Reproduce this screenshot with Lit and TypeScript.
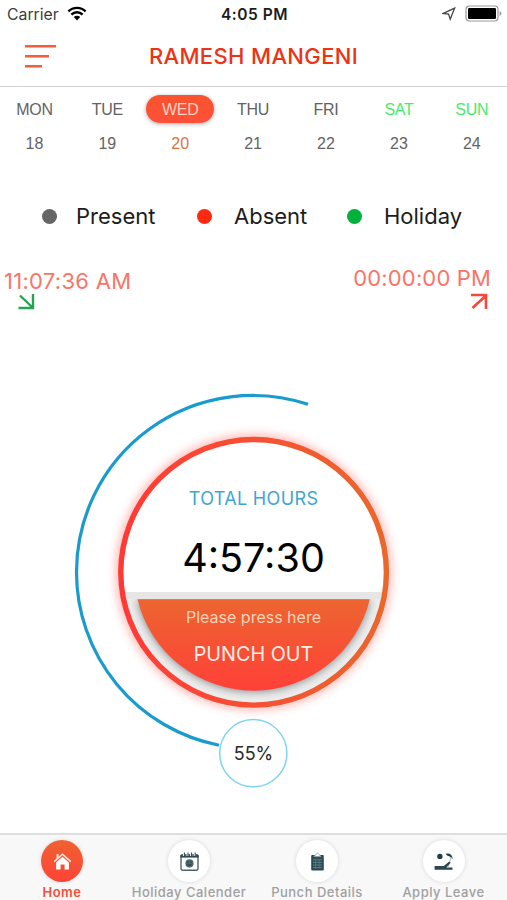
import { LitElement, html, svg, css } from "lit";
import { customElement } from "lit/decorators.js";
import { classMap } from "lit/directives/class-map.js";

const DAYS = [
  { name: "MON", date: 18 },
  { name: "TUE", date: 19 },
  { name: "WED", date: 20, active: true },
  { name: "THU", date: 21 },
  { name: "FRI", date: 22 },
  { name: "SAT", date: 23, weekend: true },
  { name: "SUN", date: 24, weekend: true },
];

const homeIcon = svg`
  <path d="M1.2 9.6 L9.5 2.2 L17.8 9.6" fill="none" stroke="#ffe9e2" stroke-width="1.5"/>
  <path d="M3.6 2h2v3.4l-2 1.8z" fill="#ffe9e2"/>
  <path d="M9.5 4.8 L15.9 10.5 V17.4 H11.6 V12.4 H7.6 V17.4 H3.1 V10.5z" fill="#fff"/>`;
const calendarIcon = svg`
  <rect x="1" y="2.8" width="17" height="15.4" rx="1.4" fill="#fff" stroke="#4a646b" stroke-width="1.4"/>
  <path d="M.4 3h18.2v2.6H.4z" fill="#2f4a52"/>
  <path d="M4 0v4M7.6 0v4M11.2 0v4M14.8 0v4" stroke="#fff" stroke-width="2.2"/>
  <path d="M4.4 .6v3.4M8 .6v3.4M11.6 .6v3.4M15.2 .6v3.4" stroke="#2f4a52" stroke-width="1.1"/>
  <circle cx="9.5" cy="11.4" r="4.1" fill="#4b666d"/>
  <path d="M7.3 10.2h1.2M10.4 10.2h1.2M7.4 12.6q2.1 1.4 4.2 0" fill="none" stroke="#1f383f" stroke-width="1"/>`;
const clipboardIcon = svg`
  <rect x="3.2" y="3" width="12.6" height="15.4" rx=".9" fill="#2b4a53"/>
  <path d="M5.9 4.6 9.5 .8 13.1 4.6z" fill="#fff" stroke="#8b9da2" stroke-width=".8"/>
  <path d="M5 7.8h9M5 10.4h9M5 13h9M5 15.6h9" stroke="#6f8d95" stroke-width=".8"/>
  <path d="M7.6 7v9.6M11.2 7v9.6" stroke="#5b7a83" stroke-width=".7"/>`;
const leaveIcon = svg`
  <circle cx="5.9" cy="4.4" r="2.7" fill="#223f48"/>
  <path d="M11.6 1.8 Q17.6 .4 18.8 7 L17 5.6 15.2 4.2 13.4 3.8z" fill="#223f48"/>
  <path d="M17.2 5 L14 15" stroke="#9fb0b5" stroke-width=".9"/>
  <path d="M.6 14h9.2l5.4-4.6 1.5 1.4-4.4 4.8h6.2v2.2H.6z" fill="#2b4750"/>`;

const TABS = [
  { label: "Home", icon: homeIcon, active: true },
  { label: "Holiday Calender", icon: calendarIcon },
  { label: "Punch Details", icon: clipboardIcon },
  { label: "Apply Leave", icon: leaveIcon },
];

@customElement("app-root")
export class AppRoot extends LitElement {
  static styles = css`
    :host {
      display: flex;
      flex-direction: column;
      height: 900px;
      overflow: hidden;
      background: #fff;
      font-family: Inter, "Liberation Sans", sans-serif;
      color: #1c1c1c;
    }
    * { box-sizing: border-box; }
    svg { display: block; }
    span { white-space: nowrap; }
    .status {
      display: grid;
      grid-template-columns: 1fr auto 1fr;
      align-items: center;
      height: 28px;
      padding: 0 5px 0 7px;
    }
    .carrier { display: flex; align-items: center; gap: 8px; font-size: 15.8px; color: #3c3c3c; }
    .carrier svg { margin-bottom: 2px; }
    .clock { font-size: 15.5px; font-weight: 600; letter-spacing: .5px; }
    .indicators { display: flex; align-items: center; justify-content: flex-end; gap: 9px; padding-bottom: 1px; }
    .header {
      display: grid;
      grid-template-columns: 64px 1fr 64px;
      align-items: center;
      height: 59px;
      padding-bottom: 2px;
      border-bottom: 1px solid #d2d2d2;
    }
    .menu { padding-left: 24px; }
    .title { text-align: center; font-size: 22px; font-weight: 500; color: #ee3214; letter-spacing: .35px; }
    .week {
      display: grid;
      grid-template-columns: repeat(7, 72.9px);
      margin-left: -2px;
      padding-top: 8px;
    }
    .day { display: flex; flex-direction: column; align-items: center; font-family: "Liberation Sans", sans-serif; color: #636363; }
    .name { display: flex; align-items: center; justify-content: center; width: 68px; height: 28px; padding-top: 2px; border-radius: 14px; font-size: 16px; letter-spacing: -.3px; }
    .date { margin-top: 11px; line-height: 20px; font-size: 16px; }
    .weekend .name { color: #45ec6c; }
    .active .name { color: #ffd2c4; background: linear-gradient(#f8532e, #fc5038); box-shadow: 0 1px 4px #0005; }
    .active .date { color: #dc7146; }
    .legend {
      display: grid;
      grid-template-columns: 155px 150px auto;
      padding-left: 42px;
      margin-top: 48px;
      height: 28px;
      align-items: center;
    }
    .key { display: flex; align-items: center; font-size: 22px; }
    .key span { margin-top: -1px; }
    .dot { width: 15px; height: 15px; border-radius: 50%; }
    .present { background: #666; margin-right: 19px; }
    .absent { background: #fd2a12; margin-right: 22px; }
    .holiday { background: #04b13c; margin-right: 22px; }
    .punches { display: flex; justify-content: space-between; padding: 36px 16px 0 4px; height: 90px; }
    .punch { display: flex; flex-direction: column; }
    .in { padding-top: 2px; }
    .out { align-items: flex-end; margin-top: -1px; }
    .time { font-size: 22px; line-height: 26px; color: #fa7468; letter-spacing: .28px; }
    .out .time { letter-spacing: .15px; }
    .in svg { margin: 0 0 0 14px; }
    .out svg { margin: 2px 3px 0 0; }
    .dial {
      position: relative;
      width: 360px;
      height: 410px;
      margin: 68px 0 0 73px;
    }
    .rings { position: absolute; inset: 0; }
    .face {
      position: relative;
      display: flex;
      flex-direction: column;
      align-items: center;
      padding-top: 99px;
      width: 361px;
    }
    .caption { font-size: 18px; line-height: 24px; color: #3fa5d3; letter-spacing: .35px; }
    .total { margin-top: 15px; font-size: 39.5px; line-height: 64px; color: #000; }
    .hint { margin-top: 16px; font-size: 16px; line-height: 22px; color: #ffd2b8; }
    .action { margin-top: 13px; font-size: 19.8px; line-height: 26px; color: #ffeee6; }
    .percent { margin-top: 75px; font-size: 18px; line-height: 24px; color: #2a2a2a; }
    .tabs {
      display: grid;
      grid-template-columns: 124px 130px 126px 127px;
      margin-top: auto;
      height: 67px;
      background: #f8f8f8;
      border-top: 2px solid #dedede;
    }
    .tab { display: flex; flex-direction: column; align-items: center; padding-top: 5px; }
    .bubble { display: flex; align-items: center; justify-content: center; width: 42px; height: 42px; border-radius: 50%; background: #fff; box-shadow: 0 0 4px #0002; }
    .label { margin-top: 2px; font-size: 13px; line-height: 16px; font-weight: 500; letter-spacing: .5px; color: #a0a0a0; }
    .current .bubble { background: linear-gradient(#ee6230, #ff4338); }
    .current .label { color: #f84b38; font-weight: 600; }
  `;

  render() {
    return html`
      <div class="status">
        <div class="carrier">
          <span>Carrier</span>
          <svg width="20" height="15" viewBox="0 0 20 15" fill="none" stroke="#000" stroke-width="2.4">
            <path d="M1.4 5.4a12.2 12.2 0 0 1 17.2 0M4.4 8.6a7.9 7.9 0 0 1 11.2 0" />
            <path d="M6.8 11.1a4.5 4.5 0 0 1 6.4 0L10 14.4z" fill="#000" stroke="none" />
          </svg>
        </div>
        <span class="clock">4:05 PM</span>
        <div class="indicators">
          <svg width="14" height="14" viewBox="0 0 14 14" fill="none" stroke="#444" stroke-width="1.3">
            <path d="M12.6 1.2 L1.4 6.4 L6.6 7 L8.2 12.2z" />
          </svg>
          <svg width="37" height="17" viewBox="0 0 37 17">
            <rect x="1" y="1" width="32" height="15" rx="3.4" fill="#fff" stroke="#999" stroke-width="1.2" />
            <rect x="3" y="3" width="28" height="11" rx="1.2" />
            <path d="M34.6 6v5q1.8-.8 1.8-2.5T34.6 6z" fill="#999" />
          </svg>
        </div>
      </div>
      <div class="header">
        <div class="menu">
          <svg width="33" height="26" viewBox="0 0 33 26" stroke="#f85a3a" stroke-width="2.5">
            <path d="M1 3.2H32M1 13.2H25M1 23.2H18" />
          </svg>
        </div>
        <span class="title">RAMESH MANGENI</span>
      </div>
      <div class="week">
        ${DAYS.map(
          (d) => html`<div class=${classMap({ day: true, active: !!d.active, weekend: !!d.weekend })}>
            <span class="name">${d.name}</span><span class="date">${d.date}</span>
          </div>`
        )}
      </div>
      <div class="legend">
        <div class="key"><i class="dot present"></i><span>Present</span></div>
        <div class="key"><i class="dot absent"></i><span>Absent</span></div>
        <div class="key"><i class="dot holiday"></i><span>Holiday</span></div>
      </div>
      <div class="punches">
        <div class="punch in">
          <span class="time">11:07:36 AM</span>
          <svg width="17" height="16" viewBox="0 0 17 16" fill="none" stroke="#27a354" stroke-width="2.4">
            <path d="M2 1.5 L14.5 13.5M15 0V14H.5" />
          </svg>
        </div>
        <div class="punch out">
          <span class="time">00:00:00 PM</span>
          <svg width="17" height="17" viewBox="0 0 17 17" fill="none" stroke="#f5473c" stroke-width="2.6">
            <path d="M1.5 15 L14.5 3M0 2H15V16" />
          </svg>
        </div>
      </div>
      <div class="dial">
        <svg class="rings" width="360" height="410" viewBox="73 388 360 410">
          <defs>
            <linearGradient id="ring"><stop offset="0" stop-color="#ff3a35" /><stop offset=".25" stop-color="#fc4535" /><stop offset="1" stop-color="#ea672b" /></linearGradient>
            <linearGradient id="punch" x2="0" y2="1"><stop offset="0" stop-color="#ec6530" /><stop offset="1" stop-color="#ff4038" /></linearGradient>
            <filter id="soft" x="-20%" y="-20%" width="140%" height="140%"><feGaussianBlur stdDeviation="4" /></filter>
            <clipPath id="disc"><circle cx="253.6" cy="572.3" r="131" /></clipPath>
          </defs>
          <path d="M308 404.3 A176.5 176.5 0 0 0 76.5 572 A176.5 176.5 0 0 0 219 745.2" fill="none" stroke="#199bcd" stroke-width="3.2" />
          <circle cx="253.6" cy="572.3" r="134" fill="none" stroke="#ff5a55" stroke-opacity=".45" stroke-width="8" filter="url(#soft)" />
          <circle cx="253.6" cy="572.3" r="132.8" fill="#fff" />
          <g clip-path="url(#disc)">
            <rect x="118" y="592" width="272" height="120" fill="#ececec" />
            <path d="M137.5 600 A119.5 119.5 0 0 0 369.7 600z" fill="#000" opacity=".45" filter="url(#soft)" />
            <rect x="118" y="592" width="272" height="7" fill="#e6e6e6" />
          </g>
          <path d="M137.5 599.3 H369.8 A119.5 119.5 0 0 1 137.5 599.3z" fill="url(#punch)" />
          <circle cx="253.6" cy="572.3" r="132.8" fill="none" stroke="url(#ring)" stroke-width="5.4" />
          <circle cx="253.3" cy="753.2" r="33.6" fill="#fff" stroke="#7fd3f2" stroke-width="1.5" />
        </svg>
        <div class="face">
          <span class="caption">TOTAL HOURS</span>
          <span class="total">4:57:30</span>
          <span class="hint">Please press here</span>
          <span class="action">PUNCH OUT</span>
          <span class="percent">55%</span>
        </div>
      </div>
      <div class="tabs">
        ${TABS.map(
          (t) => html`<div class=${classMap({ tab: true, current: !!t.active })}>
            <div class="bubble"><svg width="19" height="19" viewBox="0 0 19 19">${t.icon}</svg></div>
            <span class="label">${t.label}</span>
          </div>`
        )}
      </div>
    `;
  }
}
